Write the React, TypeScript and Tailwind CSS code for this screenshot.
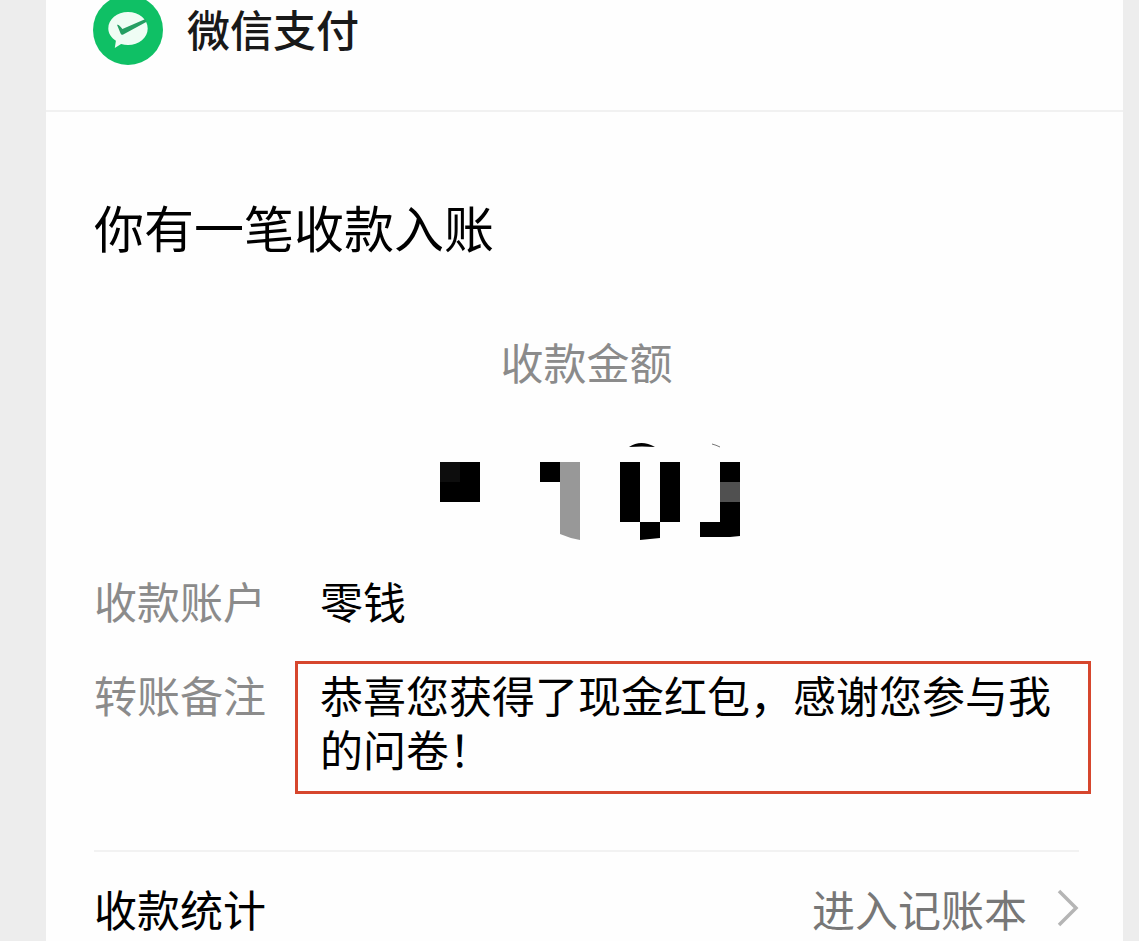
interface DetailRowProps {
    label: string
    children: React.ReactNode
    boxed?: boolean
}

function PayLogo() {
    return (
        <svg viewBox="0 5 70 65" className="h-[65px] w-[70px] shrink-0" aria-hidden="true">
            <circle cx="35" cy="35" r="35" fill="#0fc065" />
            <path
                d="M35 17c11 0 19.700 7.200 19.700 16.500S46 50 35 50c-2.400 0-4.700-.4-6.900-1.100l-6.300 4.100 1.100-7.300c-4.700-3-7.600-7.200-7.600-12.200C15.300 24.200 24 17 35 17Z"
                fill="#effdf4"
            />
            <path d="M24 29.800c1.800-.4 3.200 1.600 5.400 4.200L52.500 24l.7 3L30.200 39.500c-1.200.6-2 .3-2.600-1Z" fill="#259e62" />
        </svg>
    )
}

function MaskedAmount() {
    return (
        <svg viewBox="-8 0 310 102" className="h-[102px] w-[310px]" role="img">
            <path d="M0 22h40v40H0zM100 22h20v20h-20zM180 22h20v60h-20zM220 22h20v60h-20zM200 82h20v16l-20 2zM280 22h20v74l-10 1h-30V82h20z" />
            <path d="M0 22h20v20H0z" fill="#0d0d0d" />
            <path d="M120 22h20v78q-11-2-20-6z" fill="#989898" />
            <path d="M280 42h20v20h-20z" fill="#505050" />
            <path d="M189 7q12-8 26 0-13-1-26 0Z" />
            <path d="M272 4q4 1 8 3" fill="none" stroke="#777" />
        </svg>
    )
}

function DetailRow({ label, children, boxed = false }: DetailRowProps) {
    return (
        <div className="flex items-start">
            <dt className={`w-[201px] shrink-0 text-[#8b8b8b] ${boxed ? 'pt-[6px]' : ''}`}>{label}</dt>
            <dd className={`min-w-0 flex-1 ${boxed ? 'border-[3px] border-[#d6462d] pb-4 pl-[22px] pr-5 pt-[3px]' : 'pl-[25px]'}`}>
                {children}
            </dd>
        </div>
    )
}

export default function App() {
    return (
        <div className="min-h-screen overflow-hidden bg-[#ededed] pl-[46px] pr-4 font-['Noto_Sans_CJK_SC',sans-serif] text-[43px] leading-[54px] text-black">
            <main className="min-h-screen bg-[#fefefe]">

                {/* Header */}
                <header className="flex items-start gap-6 border-b-2 border-[#f1f1f1] pb-[45px] pl-[47px]">
                    <PayLogo />
                    <h1 className="pt-px font-medium text-[#191919]">微信支付</h1>
                </header>

                <div className="pl-12 pr-8 pt-[84px]">
                    <h2 className="text-[50px] leading-[60px]">你有一笔收款入账</h2>

                    {/* Amount */}
                    <section className="mr-3 mt-[78px] flex flex-col items-center gap-[52px]">
                        <p className="text-[#8b8b8b]">收款金额</p>
                        <MaskedAmount />
                    </section>

                    {/* Details */}
                    <dl className="mt-[31px] flex flex-col gap-[34px]">
                        <DetailRow label="收款账户">零钱</DetailRow>
                        <DetailRow label="转账备注" boxed>
                            恭喜您获得了现金红包，感谢您参与我的问卷！
                        </DetailRow>
                    </dl>

                    {/* Footer link */}
                    <a href="#ledger" className="mr-3 mt-14 flex items-center border-t-2 border-[#f2f2f2] pt-[29px]">
                        <span>收款统计</span>
                        <span className="ml-auto text-[#777777]">进入记账本</span>
                        <svg viewBox="0 0 22 38" className="ml-[30px] h-[38px] w-[22px]" fill="none" stroke="#b5b5b5" strokeWidth="3.500" aria-hidden="true">
                            <path d="m2 2 17 17L2 36" />
                        </svg>
                    </a>
                </div>
            </main>
        </div>
    )
}
